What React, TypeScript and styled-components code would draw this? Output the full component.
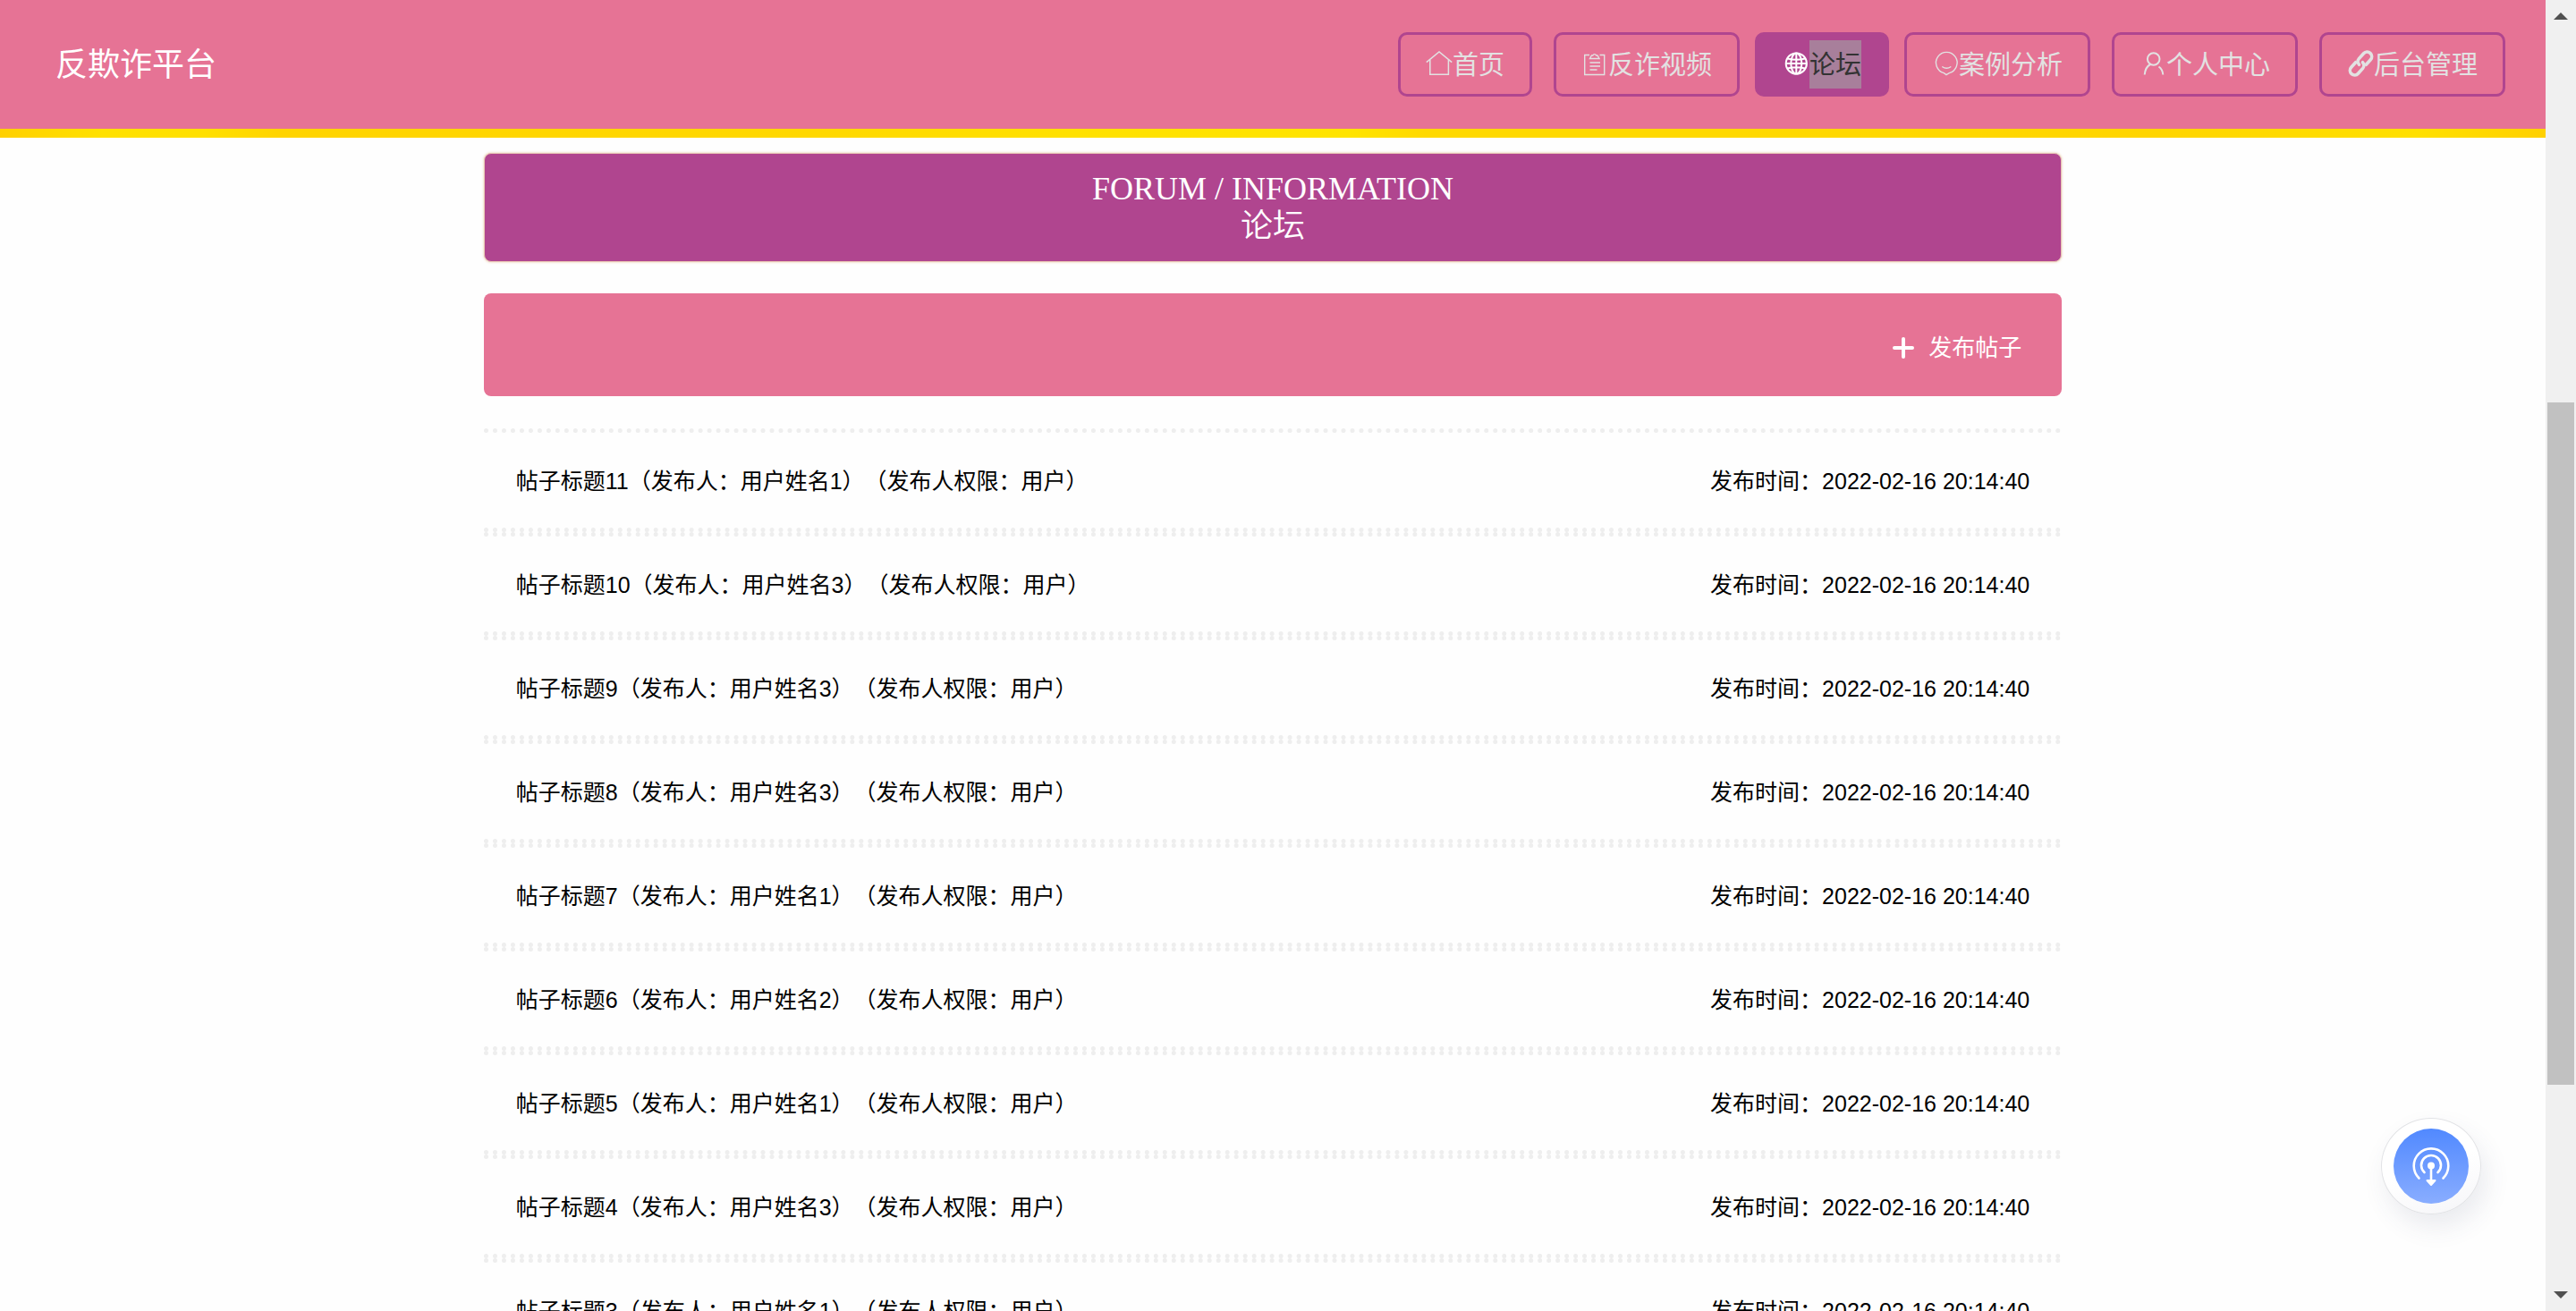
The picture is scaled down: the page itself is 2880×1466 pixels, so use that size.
import React from "react";
import styled, { createGlobalStyle } from "styled-components";

const GlobalStyle = createGlobalStyle`
  * { box-sizing: border-box; }
  html { background: #fefefe; }
  body {
    margin: 0;
    font-family: "Liberation Sans", "Noto Sans CJK SC", sans-serif;
    text-spacing-trim: space-all;
  }
`;

const Screen = styled.div`
  display: flex;
  height: 100vh;
  overflow: hidden;
`;

const Page = styled.div`
  flex: 1;
  min-width: 0;
  height: 100%;
  overflow: hidden;
`;

const Header = styled.header`
  display: flex;
  align-items: center;
  justify-content: space-between;
  height: 144px;
  padding: 0 45px 0 62px;
  background: #e67395;
`;

const Brand = styled.a`
  padding-top: 2px;
  color: #fff;
  font-size: 36px;
  line-height: 48px;
  text-decoration: none;
`;

const Nav = styled.nav`
  display: flex;
`;

const NavLink = styled.a<{ $active?: boolean }>`
  display: flex;
  align-items: center;
  height: 72px;
  padding: 0 28px;
  margin-left: ${(p) => (p.$active ? 17 : 24)}px;
  border: 3px solid #b0458f;
  border-radius: 10px;
  background: ${(p) => (p.$active ? "#b0458f" : "transparent")};
  color: ${(p) => (p.$active ? "#fff" : "#e2e2e2")};
  font-size: 29px;
  line-height: 52px;
  text-decoration: none;
  white-space: nowrap;

  &[aria-current] + & {
    margin-left: 17px;
  }
`;

const NavIcon = styled.svg`
  width: 30px;
  height: 30px;
  flex: none;
  overflow: visible;
`;

const NavText = styled.span<{ $active?: boolean }>`
  padding-top: 2px;
  color: ${(p) => (p.$active ? "#333" : "inherit")};
  background: ${(p) => (p.$active ? "#a87f9b" : "transparent")};
`;

const YellowStrip = styled.div`
  height: 10px;
  background: linear-gradient(90deg, #ffd000 0%, #ffe100 4%, #ffe000 8%, #ffd400 11%, #ffd800 32%, #ffe100 42%, #ffe400 53%, #ffd900 56%, #ffd900 68%, #ffd500 85%, #ffe000 95%, #ffd000 100%);
`;

const Content = styled.main`
  width: 62%;
  margin: 17px auto 0;
`;

const Banner = styled.h1`
  margin: 0 0 35px;
  padding: 18px 0;
  border: 1px solid #e8c4b4;
  border-radius: 8px;
  background: #b0458f;
  box-shadow: 0 0 3px #e8c9a8;
  color: #fff;
  font-family: "Liberation Serif", "Noto Sans CJK SC", serif;
  font-weight: 350;
  font-size: 36px;
  line-height: 42px;
  text-align: center;
`;

const BannerLine = styled.span`
  display: block;
`;

const Toolbar = styled.div`
  display: flex;
  align-items: center;
  justify-content: flex-end;
  height: 115px;
  padding: 6px 45px 0 0;
  margin-bottom: 36px;
  border-radius: 8px;
  background: #e67395;
`;

const PublishButton = styled.button`
  display: flex;
  align-items: center;
  gap: 16px;
  padding: 0;
  border: 0;
  background: none;
  color: #fff;
  font-family: inherit;
  font-size: 26px;
  line-height: 36px;
`;

const PostList = styled.ul`
  margin: 0;
  padding: 0;
  list-style: none;
`;

const PostRow = styled.li`
  border-top: 5px dotted #eee;
  border-bottom: 5px dotted #eee;
`;

const PostLink = styled.a`
  display: flex;
  align-items: center;
  justify-content: space-between;
  height: 106px;
  padding: 2px 36px 0;
  color: #000;
  font-size: 25px;
  line-height: 36px;
  text-decoration: none;
  white-space: nowrap;
`;

const FloatingButton = styled.button`
  position: fixed;
  right: 106px;
  bottom: 108px;
  display: flex;
  align-items: center;
  justify-content: center;
  width: 112px;
  height: 108px;
  padding: 0;
  border: 1px solid #e2e3e6;
  border-radius: 50%;
  background: linear-gradient(160deg, #fff 50%, #f5f5f8);
  box-shadow: 6px 14px 28px rgba(60, 70, 110, 0.1);
`;

const FloatingCore = styled.span`
  display: flex;
  align-items: center;
  justify-content: center;
  width: 84px;
  height: 84px;
  border-radius: 50%;
  background: linear-gradient(#5189ff, #89adff);
`;

const Scrollbar = styled.div`
  display: flex;
  flex-direction: column;
  align-items: center;
  width: 34px;
  height: 100%;
  padding: 14px 0;
  background: #f0f0f0;
`;

const ScrollTrack = styled.div`
  display: flex;
  flex-direction: column;
  flex: 1;
  width: 30px;
  margin: 12px 0;
`;

const TrackSpace = styled.div<{ $grow: number }>`
  flex: ${(p) => p.$grow} 0 0;
`;

const Thumb = styled(TrackSpace)`
  background: #c1c1c1;
`;

const navItems = [
  {
    label: "首页",
    icon: (
      <g fill="none" stroke="currentColor" strokeWidth="1.5">
        <path d="M.8 12.600 15 1l14.200 11.600M4.800 10V26.200h20.600V10" />
      </g>
    ),
  },
  {
    label: "反诈视频",
    icon: (
      <g fill="none" stroke="currentColor" strokeWidth="1.4">
        <path d="M9 4.500H3.700v22h22v-22H20.500M9.500 8.500h10.500l-2-3.500h-1.400a2 2 0 0 0-3.800 0h-1.400z" />
        <path d="M9.500 13h11.500M9.500 17h11.500M9.500 21h8" />
      </g>
    ),
  },
  {
    label: "论坛",
    active: true,
    icon: (
      <g fill="none" stroke="currentColor" strokeWidth="2">
        <circle cx="15.300" cy="14" r="11.600" />
        <ellipse cx="15.300" cy="14" rx="6" ry="11.600" />
        <path d="M15.300 2.400v23.200M3.700 14h23.200M5.500 8.500q9.800 2.500 19.600 0M5.500 19.500q9.800-2.500 19.600 0" />
      </g>
    ),
  },
  {
    label: "案例分析",
    icon: (
      <g fill="none" stroke="currentColor" strokeWidth="1.4">
        <path d="M13.300 24.600A11.800 11.800 0 1 1 19.300 24.600L16 26.600z" />
        <path d="M11.300 17.500q5 3.600 10 0" />
      </g>
    ),
  },
  {
    label: "个人中心",
    icon: (
      <g fill="none" stroke="currentColor" strokeWidth="2">
        <circle cx="15.700" cy="9" r="6.800" />
        <path d="M12 15Q6.500 18 5.700 26.500M21.500 17.500q4.300 3 4.800 9" />
      </g>
    ),
  },
  {
    label: "后台管理",
    icon: (
      <g
        fill="none"
        stroke="currentColor"
        strokeWidth="3.6"
        strokeLinecap="round"
        transform="translate(15.500 14) rotate(-48)"
      >
        <path d="M3 5.200H10.400a5.200 5.200 0 0 0 0-10.400H2.500A5 5 0 0 0-2.300-.6" />
        <path d="M-3-5.200H-10.400a5.200 5.200 0 0 0 0 10.400H-2.500A5 5 0 0 0 2.300.6" />
      </g>
    ),
  },
];

const posts = [
  { id: 11, user: 1 },
  { id: 10, user: 3 },
  { id: 9, user: 3 },
  { id: 8, user: 3 },
  { id: 7, user: 1 },
  { id: 6, user: 2 },
  { id: 5, user: 1 },
  { id: 4, user: 3 },
  { id: 3, user: 1 },
];

export default function App() {
  return (
    <Screen>
      <GlobalStyle />
      <Page>
        <Header>
          <Brand href="#">反欺诈平台</Brand>
          <Nav>
            {navItems.map((item) => (
              <NavLink
                key={item.label}
                href="#"
                $active={item.active}
                aria-current={item.active ? "page" : undefined}
              >
                <NavIcon viewBox="0 0 30 30" aria-hidden="true">
                  {item.icon}
                </NavIcon>
                <NavText $active={item.active}>{item.label}</NavText>
              </NavLink>
            ))}
          </Nav>
        </Header>
        <YellowStrip />
        <Content>
          <Banner>
            <BannerLine>FORUM / INFORMATION</BannerLine>
            <BannerLine>论坛</BannerLine>
          </Banner>
          <Toolbar>
            <PublishButton type="button">
              <svg width="24" height="24" viewBox="0 0 24 24" aria-hidden="true">
                <path d="M12 2v20M2 12h20" stroke="currentColor" strokeWidth="4" strokeLinecap="round" />
              </svg>
              发布帖子
            </PublishButton>
          </Toolbar>
          <PostList>
            {posts.map((post) => (
              <PostRow key={post.id}>
                <PostLink href="#">
                  <span>{`帖子标题${post.id}（发布人：用户姓名${post.user}）（发布人权限：用户）`}</span>
                  <span>发布时间：2022-02-16 20:14:40</span>
                </PostLink>
              </PostRow>
            ))}
          </PostList>
        </Content>
        <FloatingButton type="button" aria-label="投屏">
          <FloatingCore>
            <svg width="44" height="46" viewBox="0 0 44 46" fill="none" stroke="#fff" aria-hidden="true">
              <path d="M8.500 36.500a19.300 19.300 0 1 1 27 0" strokeWidth="2.600" strokeLinecap="round" />
              <path d="M14.500 30a11 11 0 1 1 15 0" strokeWidth="2.600" strokeLinecap="round" />
              <circle cx="22" cy="22.500" r="4" fill="#fff" stroke="none" />
              <path d="M22 23v16" strokeWidth="2.600" />
              <path d="M17.500 39h9L22 44z" fill="#fff" strokeWidth="2" strokeLinejoin="round" />
            </svg>
          </FloatingCore>
        </FloatingButton>
      </Page>
      <Scrollbar aria-hidden="true">
        <svg width="16" height="8" viewBox="0 0 16 8">
          <path d="M0 8 8 0l8 8z" fill="#505050" />
        </svg>
        <ScrollTrack>
          <TrackSpace $grow={416} />
          <Thumb $grow={763} />
          <TrackSpace $grow={219} />
        </ScrollTrack>
        <svg width="16" height="8" viewBox="0 0 16 8">
          <path d="M0 0h16L8 8z" fill="#505050" />
        </svg>
      </Scrollbar>
    </Screen>
  );
}
